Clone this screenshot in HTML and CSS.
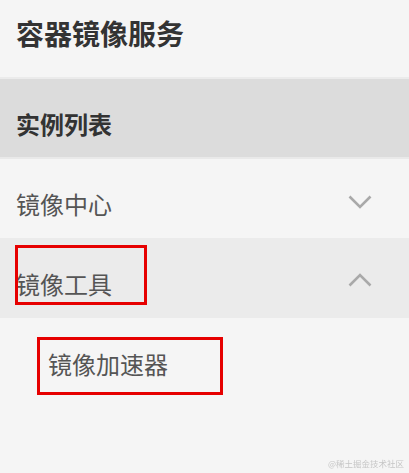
FILE: index.html
```html
<!DOCTYPE html>
<html lang="zh-CN">
<head>
  <meta charset="UTF-8" />
  <meta name="viewport" content="width=device-width, initial-scale=1.0" />
  <title>容器镜像服务</title>
  <link rel="stylesheet" href="styles.css">
</head>
<body>
  <div class="menu">
    <div class="menu-title">容器镜像服务</div>
    <div class="menu-section">实例列表</div>
    <div class="menu-row">
      <span class="label">镜像中心</span>
      <svg class="chevron down" width="24" height="14" viewBox="0 0 24 14">
        <polyline points="1.5,1.5 12,12 22.5,1.5" fill="none" stroke="#a9a9a9" stroke-width="2.6" />
      </svg>
    </div>
    <div class="menu-row open">
      <span class="label">镜像工具</span>
      <svg class="chevron up" width="24" height="14" viewBox="0 0 24 14">
        <polyline points="1.5,12.5 12,2 22.5,12.5" fill="none" stroke="#a9a9a9" stroke-width="2.6" />
      </svg>
      <div class="mark mark-tool"></div>
    </div>
    <div class="submenu">
      <div class="sub-item">镜像加速器</div>
    </div>
  </div>
  <div class="watermark">@稀土掘金技术社区</div>
</body>
</html>
```

FILE: styles.css
```css
* {
  box-sizing: border-box;
  margin: 0;
  padding: 0;
}
body {
  background: #f5f5f5;
  font-family: "Noto Sans CJK SC", "Noto Sans", sans-serif;
  color: #555;
  width: 409px;
  height: 473px;
  overflow: hidden;
}
.menu-title {
  height: 79px;
  padding: 19px 0 0 16px;
  font-size: 28px;
  line-height: 28px;
  font-weight: bold;
  color: #333;
  border-bottom: 2px solid #ebebeb;
}
.menu-section {
  height: 80px;
  padding: 33px 0 0 16px;
  font-size: 24px;
  line-height: 24px;
  font-weight: bold;
  color: #333;
  background: #dcdcdc;
  border-bottom: 2px solid #e9e9e9;
}
.menu-row {
  position: relative;
  display: flex;
  justify-content: space-between;
  align-items: flex-start;
  height: 79px;
  padding: 33px 37px 0 16px;
  font-size: 24px;
  line-height: 24px;
}
.menu-row .chevron {
  margin-top: 3px;
}
.menu-row.open {
  height: 80px;
  padding-top: 34px;
  background: #ebebeb;
}
.menu-row.open .chevron {
  margin-top: 1px;
}
.mark {
  position: absolute;
  border: 3px solid #e60000;
}
.mark-tool {
  left: 15px;
  top: 7px;
  width: 132px;
  height: 60px;
}
.submenu {
  padding: 19px 0 0 37px;
}
.sub-item {
  width: 186px;
  height: 58px;
  padding: 12px 0 0 8px;
  font-size: 24px;
  line-height: 24px;
  border: 3px solid #e60000;
}
.watermark {
  position: fixed;
  right: 5px;
  bottom: 4px;
  font-size: 8.5px;
  color: #c6c6c6;
}
```
